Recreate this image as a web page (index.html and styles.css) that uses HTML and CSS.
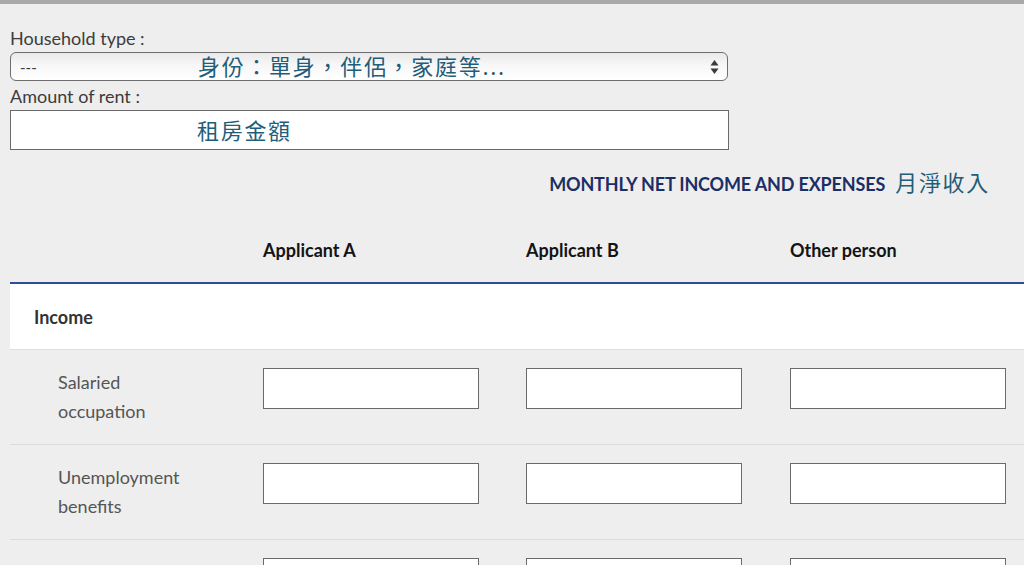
FILE: index.html
```html
<!DOCTYPE html>
<html lang="en">
<head>
<meta charset="utf-8">
<title>Household budget</title>
<link rel="stylesheet" href="styles.css">
</head>
<body>
<div class="topbar"></div>
<main class="page">
  <div class="field">
    <label class="field-label">Household type :</label>
    <div class="select">
      <span class="select-value">---</span>
      <span class="note">身份：單身，伴侶，家庭等...</span>
      <svg class="select-arrows" width="9" height="16" viewBox="0 0 9 16" aria-hidden="true">
        <path d="M4.5 1 L8.5 6.5 L0.5 6.5 Z" fill="#3a3a3a"/>
        <path d="M4.5 15 L8.5 9.5 L0.5 9.5 Z" fill="#3a3a3a"/>
      </svg>
    </div>
  </div>
  <div class="field field-rent">
    <label class="field-label">Amount of rent :</label>
    <div class="input input-wide"><span class="note">租房金額</span></div>
  </div>

  <h2 class="section-title"><span class="section-title-en">MONTHLY NET INCOME AND EXPENSES</span><span class="note section-title-zh">月淨收入</span></h2>

  <div class="table">
    <div class="row row-head">
      <div class="cell"></div>
      <div class="cell">Applicant A</div>
      <div class="cell">Applicant B</div>
      <div class="cell">Other person</div>
    </div>
    <div class="row row-group">
      <div class="cell">Income</div>
    </div>
    <div class="row row-item">
      <div class="cell cell-label">Salaried<br>occupation</div>
      <div class="cell"><div class="input"></div></div>
      <div class="cell"><div class="input"></div></div>
      <div class="cell"><div class="input"></div></div>
    </div>
    <div class="row row-item">
      <div class="cell cell-label">Unemployment<br>benefits</div>
      <div class="cell"><div class="input"></div></div>
      <div class="cell"><div class="input"></div></div>
      <div class="cell"><div class="input"></div></div>
    </div>
    <div class="row row-item">
      <div class="cell cell-label"></div>
      <div class="cell"><div class="input"></div></div>
      <div class="cell"><div class="input"></div></div>
      <div class="cell"><div class="input"></div></div>
    </div>
  </div>
</main>
</body>
</html>
```

FILE: styles.css
```css
html, body {
  margin: 0;
  padding: 0;
}
body {
  background: #eeeeee;
  font-family: Lato, "Noto Sans", sans-serif;
  color: #333;
  overflow: hidden;
  width: 1024px;
  height: 565px;
}
.topbar {
  height: 4px;
  background: #a9a9a9;
}
.page {
  padding: 0 0 0 10px;
}
.field {
  display: flex;
  flex-direction: column;
  width: 718px;
}
.field:first-child {
  padding-top: 22px;
}
.field-label {
  font-size: 18px;
  line-height: 24px;
  color: #3c3c3c;
  margin-bottom: 2px;
}
.field-rent {
  margin-top: 3px;
}
.note {
  font-family: "Noto Sans CJK TC", "Noto Sans CJK SC", sans-serif;
  color: #1f5d7a;
  font-size: 22px;
  letter-spacing: 1.7px;
  line-height: 26px;
}
.select {
  height: 27px;
  border: 1px solid #6e6e6e;
  border-radius: 6px;
  background: linear-gradient(to bottom, #e9e9e9 0%, #f7f7f7 45%, #ffffff 100%);
  display: flex;
  align-items: center;
  padding: 0 8px 0 9px;
}
.select-value {
  font-size: 15px;
  color: #3a3a3a;
  width: 178px;
}
.select .note {
  flex: 1;
  position: relative;
  top: -2px;
}
.select-arrows {
  display: block;
}
.input {
  box-sizing: border-box;
  height: 41px;
  width: 216px;
  border: 1px solid #6a6a6a;
  background: #fff;
}
.input-wide {
  width: 719px;
  height: 40px;
  display: flex;
  align-items: center;
  padding-left: 186px;
}
.input-wide .note {
  position: relative;
  top: -1px;
}
.section-title {
  margin: 18px 0 0 0;
  display: flex;
  justify-content: flex-end;
  align-items: baseline;
  height: 26px;
  padding-right: 34px;
  font-weight: normal;
}
.section-title-en {
  font-weight: 700;
  font-size: 18px;
  color: #1b2f66;
  letter-spacing: -0.15px;
  margin-right: 10px;
}
.table {
  width: 1044px;
}
.row {
  display: grid;
  grid-template-columns: 253px 263px 264px 264px;
}
.row-head {
  padding: 44px 0 20px;
  border-bottom: 2px solid #2b4e9c;
  font-weight: 700;
  font-size: 18px;
  line-height: 24px;
  color: #141414;
}
.row-group {
  background: #ffffff;
  height: 65px;
  align-items: center;
  border-bottom: 1px solid #dedede;
  font-weight: 700;
  font-size: 18px;
  color: #333;
}
.row-group .cell {
  padding-left: 24px;
}
.row-item {
  padding: 18px 0 18px;
  border-bottom: 1px solid #dcdcdc;
  align-items: start;
}
.cell-label {
  padding-left: 48px;
  font-size: 18px;
  line-height: 29px;
  color: #555;
}
```
